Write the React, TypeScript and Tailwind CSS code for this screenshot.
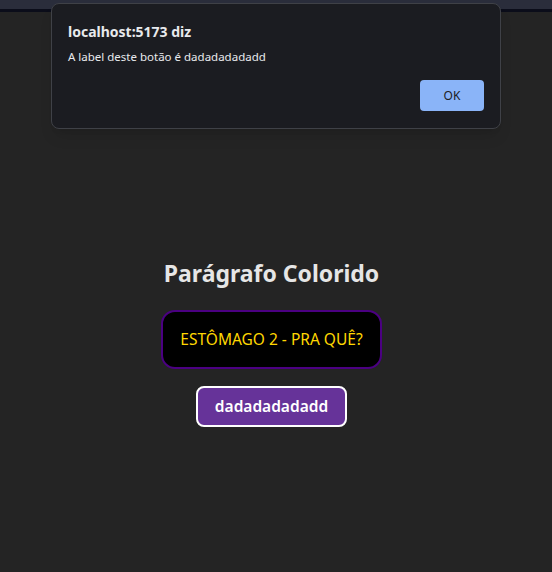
export default function App() {
  const label = 'dadadadadadd';

  return (
    <div className="relative min-h-[572px] bg-[#242424] font-['Noto_Sans',sans-serif] text-[#e8e8e8]">
      <div className="h-[9px] bg-[#2a2d3b]" />
      <div className="h-[3px] bg-[#0b0d1a]" />

      <div className="flex flex-col items-center pr-[9px] pt-[246px]">
        <h2 className="text-[23px] font-bold leading-[30px] text-[#e6e6e6]">
          Parágrafo Colorido
        </h2>
        <p className="mt-[22px] rounded-[14px] border-2 border-[#4b0082] bg-black px-[17px] py-[16px] text-[15.5px] leading-[23px] text-[#ffd700]">
          ESTÔMAGO 2 - PRA QUÊ?
        </p>
        <button className="mt-[17px] rounded-[8px] border-2 border-white bg-[#663399] px-[17px] py-[7px] text-[15.5px] font-semibold leading-[23px] text-white">
          {label}
        </button>
      </div>

      {/* alert do navegador */}
      <div className="absolute left-[51px] top-[3px] flex h-[126px] w-[450px] flex-col rounded-[8px] border border-[#3f4147] bg-[#1b1c21] px-[16px] pt-[19px] shadow-lg">
        <h3 className="text-[14px] font-bold leading-[18px] text-[#e8eaed]">
          localhost:5173 diz
        </h3>
        <p className="mt-[8px] text-[11.5px] leading-[16px] text-[#e8eaed]">
          A label deste botão é {label}
        </p>
        <div className="mt-[15px] flex justify-end">
          <button className="h-[31px] w-[64px] rounded-[4px] bg-[#8ab4f8] text-[12px] text-[#202124]">
            OK
          </button>
        </div>
      </div>
    </div>
  );
}
